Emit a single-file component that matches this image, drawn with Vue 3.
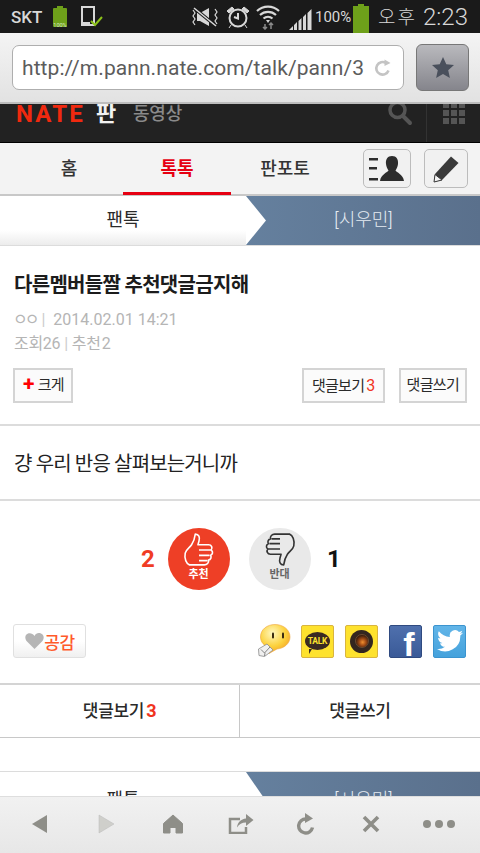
<template>
  <div class="phone">
    <!-- status bar -->
    <div class="status">
      <span class="carrier">SKT</span>
      <svg class="st-batt" width="16" height="22" viewBox="0 0 16 22">
        <rect x="5" y="0" width="6" height="3" fill="#6ea01a" />
        <rect x="1" y="2" width="14" height="19" rx="1" fill="#6ea01a" />
        <text x="8" y="20.500" font-size="5.500" fill="#d8e8c0" text-anchor="middle">100%</text>
      </svg>
      <svg class="st-dev" width="24" height="22" viewBox="0 0 24 22">
        <path d="M2 1h12v18H2z" fill="none" stroke="#d8d8d8" stroke-width="2" />
        <path d="M2 16h8v4H2z" fill="#d8d8d8" />
        <path d="M11 15l4 4 7-8" fill="none" stroke="#8cc21a" stroke-width="2" />
      </svg>
      <svg class="st-mute" width="28" height="22" viewBox="0 0 28 22">
        <path d="M9 7l9-5v18l-9-5H6V7z" fill="#d8d8d8" />
        <path d="M3 2l22 18" stroke="#1a1a1a" stroke-width="3.500" />
        <path d="M3 2l22 18" stroke="#d8d8d8" stroke-width="1.500" />
        <path d="M2 4l2 3-2 3 2 3-2 3 2 3M24 3l2 3-2 3 2 3-2 3 2 3" fill="none" stroke="#d8d8d8" stroke-width="1.200" />
      </svg>
      <svg class="st-alarm" width="24" height="24" viewBox="0 0 24 24">
        <circle cx="12" cy="13" r="8.500" fill="none" stroke="#d8d8d8" stroke-width="2" />
        <path d="M12 8v5.500l-4-1.500" fill="none" stroke="#d8d8d8" stroke-width="2" />
        <path d="M1 6l5-4 2 2-5 4zM23 6l-5-4-2 2 5 4zM5 20l-2 3M19 20l2 3" fill="#d8d8d8" stroke="#d8d8d8" />
      </svg>
      <svg class="st-wifi" width="24" height="25" viewBox="0 0 24 25">
        <path d="M1 6a16 16 0 0 1 22 0M4 10a12 12 0 0 1 16 0M7.500 13.500a7 7 0 0 1 9 0" fill="none" stroke="#d8d8d8" stroke-width="2.200" />
        <path d="M10 15h4l-2 3z" fill="#d8d8d8" />
        <path d="M9 19v5M7 22l2 2 2-2M15 24v-6M13 20l2-2 2 2" fill="none" stroke="#8a8a8a" stroke-width="1.500" />
      </svg>
      <svg class="st-signal" width="24" height="23" viewBox="0 0 24 23">
        <path d="M0 23l4-4v4zM5 23v-5l3-3v8zM9.500 23V14l3-3v12zM14 23V10l3-3v16zM18.500 23V6l4-4v21z" fill="#d8d8d8" />
      </svg>
      <span class="pct">100%</span>
      <svg class="st-batt2" width="16" height="29" viewBox="0 0 16 29">
        <rect x="5" y="0" width="6" height="3" fill="#6ea01a" />
        <rect x="0" y="2" width="16" height="27" fill="#6ea01a" />
      </svg>
      <span class="ampm">오후</span>
      <span class="clock">2:23</span>
    </div>

    <!-- browser address bar -->
    <div class="addr">
      <div class="url-box">
        <span class="url">http://m.pann.nate.com/talk/pann/3</span>
        <svg width="18" height="18" viewBox="0 0 18 18">
          <path d="M14.500 11.500A6.300 6.300 0 1 1 12 4" fill="none" stroke="#c4c4c4" stroke-width="2.600" />
          <path d="M10.500 0.500l6 3.500-6 3z" fill="#c4c4c4" />
        </svg>
      </div>
      <div class="star-btn">
        <svg width="24" height="24" viewBox="0 0 24 24">
          <path d="M12 1l3.300 7.300 7.700.8-5.800 5.200 1.700 7.700-6.900-4-6.900 4 1.700-7.700L1 9.100l7.700-.8z" fill="#4a505c" />
        </svg>
      </div>
    </div>

    <!-- page, scrolled a bit -->
    <div class="page">
      <div class="nate-head">
        <span class="nate">NATE</span>
        <span class="pan">판</span>
        <span class="video">동영상</span>
        <div class="head-right">
          <svg width="26" height="26" viewBox="0 0 26 26">
            <circle cx="10.500" cy="6" r="7.500" fill="none" stroke="#555" stroke-width="3.500" />
            <path d="M16 12l7 7" stroke="#555" stroke-width="4" stroke-linecap="round" />
          </svg>
          <div class="head-sep"></div>
          <div class="grid-icon">
            <i v-for="n in 9" :key="n"></i>
          </div>
        </div>
      </div>

      <div class="gnb">
        <div class="gnb-tabs">
          <span class="gnb-tab">홈</span>
          <span class="gnb-tab on">톡톡</span>
          <span class="gnb-tab">판포토</span>
        </div>
        <div class="icon-btn wide">
          <svg width="36" height="28" viewBox="0 0 36 28">
            <path d="M0 3h9v2.500H0zM0 12h8v2.500H0zM0 23h9v2.500H0z" fill="#2d2d2d" />
            <path d="M23 1c4.500 0 6.500 3.500 6 8-.3 3-1.500 5-2.500 6.500 1 2 7.500 3.500 8.500 10.500H11c1-7 7.500-8.500 8.500-10.500C18.500 14 17.300 12 17 9c-.5-4.500 1.500-8 6-8z" fill="#2d2d2d" />
          </svg>
        </div>
        <div class="icon-btn narrow">
          <svg width="28" height="28" viewBox="0 0 28 28">
            <path d="M19 1.500l7.500 6.500L10 25l-8 2 1-8z" fill="#3a3a3a" />
            <path d="M3 19.500l7 5.500-8 2z" fill="#f4f4f4" stroke="#3a3a3a" stroke-width="1" />
          </svg>
        </div>
      </div>

      <div class="sub-tabs">
        <div class="sub-left">팬톡</div>
        <div class="sub-right">[시우민]</div>
      </div>

      <div class="article-head">
        <h1 class="title">다른멤버들짤 추천댓글금지해</h1>
        <div class="meta"><span class="nick">ㅇㅇ</span><span class="bar">|</span>2014.02.01 14:21</div>
        <div class="meta small">조회26<span class="bar">|</span>추천<span class="num">2</span></div>
        <div class="tools">
          <div class="tool-btn zoom"><b class="plus">+</b>크게</div>
          <div class="tools-right">
            <div class="tool-btn view">댓글보기<em class="count">3</em></div>
            <div class="tool-btn write">댓글쓰기</div>
          </div>
        </div>
      </div>

      <div class="body-text">걍 우리 반응 살펴보는거니까</div>

      <div class="vote">
        <span class="vote-num up">2</span>
        <div class="vote-btn yes">
          <svg width="32" height="35" viewBox="0 0 30 33">
            <path d="M6 31c-3-1-5-6-4-11 .7-3.500 4-5 6-8 2-3 3-6 3.500-10 3.500 0 4.500 3 3.500 6.500L14 12h10c3 0 4 3 2.500 5 2 1.500 1.500 4-.5 5 1 2 0 4-2 4.500.5 2.500-1.500 4.500-4 4.500z M15 17h11M15 22h10M15 27h8" fill="none" stroke="#fff" stroke-width="1.500" stroke-linejoin="round" />
          </svg>
          <span>추천</span>
        </div>
        <div class="vote-btn no">
          <svg width="32" height="35" viewBox="0 0 30 33">
            <path d="M24 2c3 1 5 6 4 11-.7 3.500-4 5-6 8-2 3-3 6-3.500 10-3.500 0-4.500-3-3.500-6.500L16 21H6c-3 0-4-3-2.500-5-2-1.500-1.500-4 .5-5-1-2 0-4 2-4.500C5.500 4 7.500 2 10 2z M15 16H4M15 11H5M15 6.500H7" fill="none" stroke="#333" stroke-width="1.500" stroke-linejoin="round" />
          </svg>
          <span>반대</span>
        </div>
        <span class="vote-num down">1</span>
      </div>

      <div class="share-row">
        <div class="like-btn">
          <svg width="19" height="16" viewBox="0 0 19 16">
            <path d="M9.500 16L1.500 8C-.5 5.500 0 1.500 3 .5c2.500-.8 5 .3 6.500 2.500C11-.0 13.500-.3 16 .5c3 1 3.500 5 1.500 7.500z" fill="#b5b5b5" />
          </svg>
          <span>공감</span>
        </div>
        <div class="share-icons">
          <svg class="emo" width="33" height="34" viewBox="0 0 33 34">
            <defs>
              <radialGradient id="emoFill" cx="0.400" cy="0.300" r="0.800">
                <stop offset="0" stop-color="#fff8c0" />
                <stop offset="0.550" stop-color="#fcd23e" />
                <stop offset="1" stop-color="#f2981e" />
              </radialGradient>
            </defs>
            <path d="M17 0.500c8 0 15 5 15 12.500 0 6.500-6 11.500-13 12l-8 4.500c1-2 1.500-3.500 1-5.500C6 22 2.500 18 2.500 13 2.500 5.500 9 .5 17 .5z" fill="url(#emoFill)" stroke="#efa43a" stroke-width="0.600" />
            <rect x="14" y="8.500" width="2" height="6" rx="1" fill="#3a2a10" />
            <rect x="24" y="8.500" width="2" height="6" rx="1" fill="#3a2a10" />
            <path d="M0.500 25l8.500-5 6 6-8.500 6.500-5.500-1z" fill="#f0f0f0" stroke="#8a8a8a" stroke-width="0.800" />
            <path d="M3 25.500l3.500 3.500 5.500-6M6.500 32l.5-3" fill="none" stroke="#777" stroke-width="0.900" />
          </svg>
          <div class="sq kakao">
            <div class="talk-bubble">TALK</div>
          </div>
          <div class="sq story">
            <div class="lens"><div class="lens-in"></div></div>
          </div>
          <div class="sq fb">f</div>
          <div class="sq tw">
            <svg width="26" height="22" viewBox="0 0 24 20">
              <path d="M24 2.400c-.9.400-1.800.7-2.800.8 1-.6 1.800-1.600 2.200-2.700-1 .6-2 1-3.100 1.200A4.900 4.900 0 0 0 11.900 6.200C7.800 6 4.200 4 1.700.9c-1.300 2.300-.6 5.200 1.500 6.600-.8 0-1.600-.2-2.200-.6 0 2.400 1.700 4.500 4 5-.7.200-1.500.2-2.200.1.600 2 2.500 3.400 4.600 3.400A9.900 9.900 0 0 1 0 17.400 14 14 0 0 0 21.500 5c1-.7 1.800-1.600 2.500-2.600z" fill="#fff" />
            </svg>
          </div>
        </div>
      </div>

      <div class="bottom-btns">
        <div class="bottom-btn">댓글보기<em class="count">3</em></div>
        <div class="bottom-btn">댓글쓰기</div>
      </div>

      <div class="sub-tabs second">
        <div class="sub-left">팬톡</div>
        <div class="sub-right">[시우민]</div>
      </div>
    </div>

    <!-- browser toolbar -->
    <div class="toolbar">
      <svg width="18" height="20" viewBox="0 0 18 20"><path d="M16 1v18L1 10z" fill="#8e8e88" /></svg>
      <svg class="t-fwd" width="18" height="20" viewBox="0 0 18 20"><path d="M2 1v18l15-9z" fill="#cfcfcb" stroke="#bbb" stroke-width="0.500" /></svg>
      <svg class="t-home" width="22" height="20" viewBox="0 0 22 20"><path d="M11 1l9.500 8.500V19H14v-5.500H8V19H1.500V9.500z" fill="#8e8e88" stroke="#8e8e88" stroke-linejoin="round" /></svg>
      <svg class="t-share" width="26" height="20" viewBox="0 0 26 20">
        <path d="M12 5H2v14h16v-6" fill="none" stroke="#8e8e88" stroke-width="2.500" />
        <path d="M18 0l7.500 6-7.500 6V8.500c-4 0-7 1.500-9 5 .5-5 4-8.500 9-9z" fill="#8e8e88" />
      </svg>
      <svg class="t-reload" width="20" height="22" viewBox="0 0 20 22">
        <path d="M16.500 14.500A7 7 0 1 1 10 6" fill="none" stroke="#8e8e88" stroke-width="3.400" />
        <path d="M9 0l8 5.500-8 4.500z" fill="#8e8e88" />
      </svg>
      <svg class="t-close" width="18" height="18" viewBox="0 0 18 18"><path d="M2 2l14 14M16 2L2 16" stroke="#8e8e88" stroke-width="3.600" /></svg>
      <svg class="t-more" width="34" height="10" viewBox="0 0 34 10">
        <circle cx="5" cy="5" r="4" fill="#8e8e88" />
        <circle cx="17" cy="5" r="4" fill="#8e8e88" />
        <circle cx="29" cy="5" r="4" fill="#8e8e88" />
      </svg>
    </div>
  </div>
</template>

<script setup>
</script>

<style>
html, body { margin: 0; background: #fff; }
</style>

<style scoped>
.phone {
  width: 480px;
  height: 853px;
  display: flex;
  flex-direction: column;
  overflow: hidden;
  background: #fff;
  font-family: Roboto, "Noto Sans CJK KR", sans-serif;
  color: #222;
}

.status {
  height: 33px;
  flex: none;
  background: #1a1a1a;
  color: #d8d8d8;
  display: flex;
  align-items: center;
  padding-left: 11px;
}
.carrier { font-size: 17px; font-weight: 500; width: 41px; }
.st-dev { margin-left: 12px; }
.st-mute { margin-left: 87px; }
.st-alarm { margin-left: 7px; }
.st-wifi { margin-left: 6px; margin-top: 2px; }
.st-signal { margin-left: 9px; margin-top: 4px; }
.pct { font-size: 15px; margin-left: 2px; width: 38px; }
.st-batt2 { margin-top: 4px; }
.ampm { font-size: 19px; letter-spacing: 2px; margin-left: 9px; margin-top: -2px; font-weight: 300; }
.clock { font-size: 24px; font-weight: 300; margin-left: 6px; white-space: nowrap; }

.addr {
  height: 71px;
  flex: none;
  box-sizing: border-box;
  background: linear-gradient(#f4f4f4, #e2e2e2);
  border-bottom: 2px solid #bdbdbd;
  display: flex;
  align-items: center;
  padding: 0 24px 0 12px;
  gap: 12px;
}
.url-box {
  width: 392px;
  height: 45px;
  box-sizing: border-box;
  flex: none;
  background: #fff;
  border: 1px solid #aeaeae;
  border-radius: 7px;
  display: flex;
  align-items: center;
  justify-content: space-between;
  padding: 0 11px 0 9px;
}
.url { font-size: 21px; color: #5c5c5c; white-space: nowrap; letter-spacing: 0.080px; }
.star-btn {
  width: 53px;
  height: 47px;
  flex: none;
  box-sizing: border-box;
  border: 1px solid #777;
  border-radius: 6px;
  background: linear-gradient(#b9b9bd, #85858c);
  display: flex;
  align-items: center;
  justify-content: center;
}

.page { flex: 1; min-height: 0; overflow: hidden; }

.nate-head {
  height: 39px;
  box-sizing: border-box;
  background: #222;
  border-bottom: 1px solid #000;
  display: flex;
  align-items: flex-start;
  padding-left: 16px;
  overflow: hidden;
}
.nate { color: #f0290f; font-size: 24px; line-height: 20px; font-weight: 700; letter-spacing: 2.200px; width: 80px; }
.pan { color: #f2f2f2; font-size: 22px; line-height: 20px; font-weight: 700; width: 37px; }
.video { color: #8a8a8a; font-size: 18px; line-height: 20px; font-weight: 500; letter-spacing: -0.200px; }
.head-right { margin-left: auto; display: flex; }
.head-right svg { margin-right: 13px; }
.head-sep { width: 1px; height: 38px; background: #333; }
.grid-icon {
  margin: 1px 15px 0 16px;
  width: 22px;
  display: grid;
  grid-template-columns: repeat(3, 6px);
  gap: 2px;
  align-self: flex-start;
  transform: translateY(-3px);
}
.grid-icon i { height: 6px; background: #555; }

.gnb {
  height: 53px;
  box-sizing: border-box;
  background: #f3f3f3;
  border-bottom: 2px solid #c8c8c8;
  display: flex;
  align-items: flex-start;
  padding-left: 15px;
}
.gnb-tabs { display: flex; width: 324px; }
.gnb-tab {
  width: 108px;
  height: 51px;
  box-sizing: border-box;
  text-align: center;
  font-size: 18px;
  font-weight: 500;
  line-height: 52px;
  color: #333;
}
.gnb-tab.on { color: #e60012; font-weight: 700; border-bottom: 3px solid #e60012; height: 52px; }
.icon-btn {
  margin-top: 6px;
  height: 39px;
  box-sizing: border-box;
  border: 1px solid #bcbcbc;
  border-radius: 5px;
  background: #f1f1f1;
  display: flex;
  align-items: center;
  justify-content: center;
}
.icon-btn.wide { width: 48px; margin-left: 24px; }
.icon-btn.narrow { width: 44px; margin-left: 13px; }

.sub-tabs {
  height: 50px;
  display: flex;
  position: relative;
  border-bottom: 1px solid #dcdcdc;
  box-sizing: border-box;
}
.sub-left {
  width: 246px;
  text-align: center;
  font-size: 18px;
  line-height: 48px;
  color: #2a2a2a;
  background: linear-gradient(#fff 70%, #ececec);
}
.sub-right {
  flex: 1;
  text-align: center;
  font-size: 18px;
  font-weight: 300;
  line-height: 48px;
  color: #e6ecf2;
  padding-left: 1px;
  background: linear-gradient(90deg, #65809e, #5a708c);
  position: relative;
}
.sub-right::before {
  content: "";
  position: absolute;
  left: 0;
  top: 0;
  width: 20px;
  height: 100%;
  background: #fff;
  clip-path: polygon(0 0, 100% 50%, 0 100%);
}

.article-head { height: 180px; box-sizing: border-box; padding: 26px 13px 0 14px; border-bottom: 2px solid #dcdcdc; }
.title { margin: 0; font-size: 20px; line-height: 26px; font-weight: 700; letter-spacing: -0.700px; color: #1c1c1c; }
.meta { margin-top: 12px; font-size: 16px; line-height: 20px; color: #b5b5b5; }
.meta.small { margin-top: 4px; letter-spacing: -0.300px; }
.nick { letter-spacing: -3px; margin-left: -1px; }
.num { margin-left: 1px; }
.bar { margin: 0 8px 0 5px; color: #ccc; }
.small .bar { margin: 0 4px; }
.tools { margin-top: 14px; display: flex; justify-content: space-between; margin-left: -1px; }
.tools-right { display: flex; gap: 14px; }
.tool-btn {
  height: 35px;
  box-sizing: border-box;
  border: 2px solid #d4d4d4;
  background: #fbfbfb;
  font-size: 15px;
  line-height: 31px;
  letter-spacing: -0.700px;
  color: #2a2a2a;
}
.tool-btn.zoom { padding: 0 7px 0 8px; }
.tool-btn.view { padding: 0 8px; }
.tool-btn.write { padding: 0 6px; }
.plus { color: #f00; font-size: 21px; font-weight: 700; margin-right: 4px; line-height: 20px; vertical-align: -1px; }
.count { color: #f0341e; font-style: normal; margin-left: 2px; font-family: Roboto, sans-serif; font-size: 16px; }

.body-text { height: 75px; box-sizing: border-box; border-bottom: 2px solid #dcdcdc; padding-left: 14px; font-size: 20px; line-height: 76px; letter-spacing: -0.850px; color: #222; }

.vote { height: 123px; box-sizing: border-box; padding-bottom: 7px; display: flex; justify-content: center; align-items: center; }
.vote-num { font-size: 24px; font-weight: 700; width: 27px; }
.vote-num.up { color: #f03c24; margin-right: 6px; margin-left: 2px; text-align: center; }
.vote-num.down { color: #111; margin-left: 10px; text-align: center; }
.vote-btn {
  width: 62px;
  height: 62px;
  border-radius: 50%;
  display: flex;
  flex-direction: column;
  align-items: center;
  font-size: 11px;
  font-weight: 700;
  line-height: 13px;
}
.vote-btn svg { margin-top: 4px; margin-bottom: 1px; }
.vote-btn.yes { background: #ee3f26; color: #fff; margin-right: 19px; }
.vote-btn.no { background: #e9e9e9; color: #666; }

.share-row { height: 59px; box-sizing: border-box; padding: 0 14px 0 13px; display: flex; justify-content: space-between; align-items: flex-start; }
.like-btn {
  width: 73px;
  height: 34px;
  box-sizing: border-box;
  border: 1px solid #e0e0e0;
  border-radius: 3px;
  background: linear-gradient(#fff 50%, #f0f0f0);
  display: flex;
  align-items: center;
  justify-content: center;
  padding-left: 1px;
  font-size: 17px;
  font-weight: 500;
  color: #ff5a2a;
  letter-spacing: -0.300px;
}
.share-icons { display: flex; align-items: center; gap: 11px; }
.emo { margin-right: -1px; }
.sq {
  width: 33px;
  height: 33px;
  box-sizing: border-box;
  border-radius: 2px;
  display: flex;
  align-items: center;
  justify-content: center;
}
.kakao { background: #fee22e; border: 1px solid #d9b53f; }
.talk-bubble {
  position: relative;
  width: 25px;
  height: 18px;
  border-radius: 50%;
  background: #3b2a22;
  color: #fee22e;
  font-size: 8.500px;
  font-weight: 700;
  text-align: center;
  line-height: 18px;
  letter-spacing: -0.300px;
}
.talk-bubble::after {
  content: "";
  position: absolute;
  left: 4px;
  bottom: -4px;
  border-left: 3px solid #3b2a22;
  border-right: 3px solid transparent;
  border-bottom: 5px solid transparent;
}
.story { background: #fee22e; border: 1px solid #d9b53f; }
.lens { width: 23px; height: 23px; border-radius: 50%; background: #33261f; display: flex; align-items: center; justify-content: center; }
.lens-in { width: 14px; height: 14px; border-radius: 50%; background: radial-gradient(circle at 55% 60%, #f09030 0, #a04a14 35%, #2e160a 75%); border: 1px solid #6a4a30; box-sizing: border-box; }
.fb {
  background: linear-gradient(#4f70ad, #3a5a98);
  border: 1px solid #2f4a80;
  color: #fff;
  font-family: "Liberation Sans", sans-serif;
  font-weight: 700;
  font-size: 34px;
  line-height: 26px;
  align-items: flex-end;
  padding-left: 7px;
}
.tw { background: linear-gradient(#62b5e8, #45a2dc); border: 1px solid #3b94cf; }

.bottom-btns { height: 55px; box-sizing: border-box; display: flex; border-top: 2px solid #d4d4d4; border-bottom: 1px solid #c8c8c8; }
.bottom-btn {
  flex: 1;
  box-sizing: border-box;
  text-align: center;
  font-size: 17px;
  font-weight: 500;
  line-height: 52px;
  letter-spacing: -0.300px;
  color: #2a2a2a;
}
.bottom-btn:first-child { flex: 0 0 240px; border-right: 1px solid #c8c8c8; }
.bottom-btn .count { font-size: 18px; font-weight: 700; }

.sub-tabs.second { margin-top: 33px; height: 60px; border-top: 1px solid #dcdcdc; }
.second .sub-left, .second .sub-right { line-height: 55px; }

.toolbar {
  height: 57px;
  flex: none;
  box-sizing: border-box;
  background: linear-gradient(#f1f1f1, #e7e7e7);
  border-top: 1px solid #dedede;
  display: flex;
  align-items: center;
  padding: 0 0 2px 31px;
}
.t-fwd { margin-left: 48px; }
.t-home { margin-left: 47px; }
.t-share { margin-left: 44px; }
.t-reload { margin-left: 42px; }
.t-close { margin-left: 46px; }
.t-more { margin-left: 42px; }
</style>
